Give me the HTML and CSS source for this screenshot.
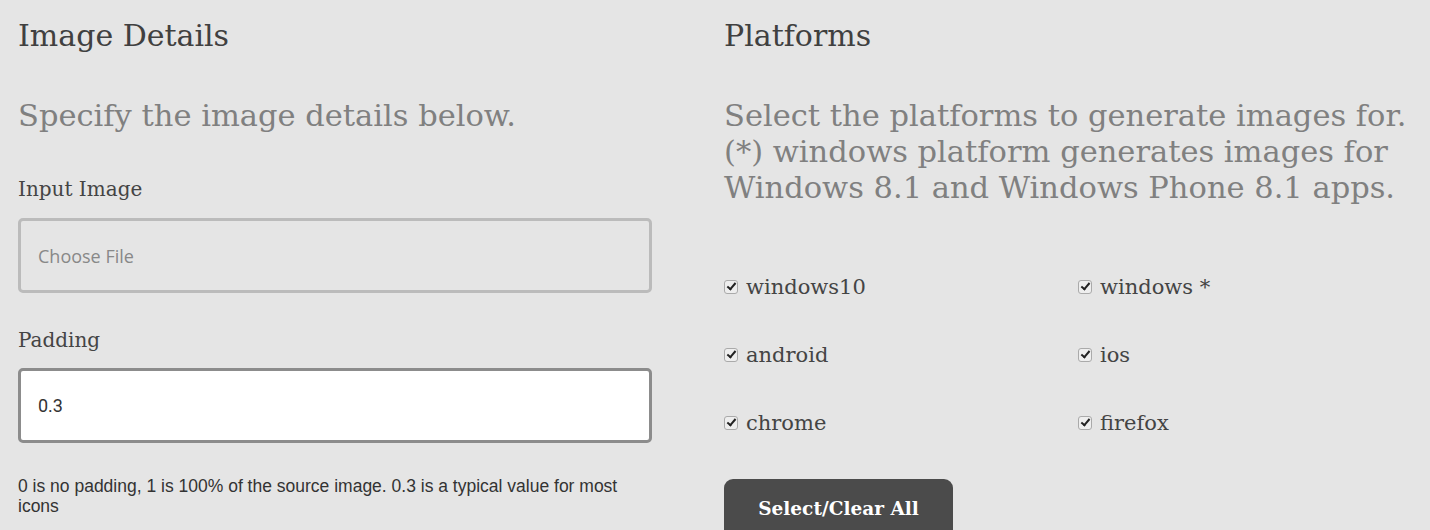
FILE: index.html
```html
<!DOCTYPE html>
<html lang="en">
<head>
<meta charset="utf-8">
<title>Image Generator</title>
<link rel="stylesheet" href="styles.css">
</head>
<body>
<div class="page">
  <section class="col">
    <h2 class="title">Image Details</h2>
    <p class="lead">Specify the image details below.</p>
    <label class="field-label first">Input Image</label>
    <div class="box box-file">Choose File</div>
    <label class="field-label">Padding</label>
    <div class="box box-text">0.3</div>
    <p class="help">0 is no padding, 1 is 100% of the source image. 0.3 is a typical value for most icons</p>
  </section>
  <section class="col">
    <h2 class="title">Platforms</h2>
    <p class="lead">Select the platforms to generate images for.<br>(*) windows platform generates images for<br>Windows 8.1 and Windows Phone 8.1 apps.</p>
    <div class="platforms">
      <label class="check"><span class="tick"></span>windows10</label>
      <label class="check"><span class="tick"></span>windows *</label>
      <label class="check"><span class="tick"></span>android</label>
      <label class="check"><span class="tick"></span>ios</label>
      <label class="check"><span class="tick"></span>chrome</label>
      <label class="check"><span class="tick"></span>firefox</label>
    </div>
    <button class="btn" type="button">Select/Clear All</button>
  </section>
</div>
</body>
</html>
```
FILE: styles.css
```css
html, body {
  margin: 0;
  padding: 0;
  background: #e5e5e5;
  overflow: hidden;
}
.page {
  display: grid;
  grid-template-columns: 706px 706px;
  padding: 0 0 0 18px;
  font-family: "DejaVu Serif", serif;
}
.col {
  display: flex;
  flex-direction: column;
  align-items: flex-start;
}
.title {
  margin: 18px 0 0;
  font-size: 30px;
  line-height: 36px;
  font-weight: normal;
  color: #404040;
  white-space: nowrap;
}
.lead {
  margin: 44px 0 0;
  font-size: 30.5px;
  line-height: 36px;
  color: #808080;
  white-space: nowrap;
}
.field-label {
  margin-top: 35px;
  font-size: 20px;
  line-height: 24px;
  color: #444;
}
.field-label.first {
  margin-top: 43px;
}
.box {
  box-sizing: border-box;
  width: 634px;
  height: 75px;
  margin-top: 16px;
  border: 3px solid #bbb;
  border-radius: 5px;
  padding: 0 17px;
  display: flex;
  align-items: center;
  font-size: 18px;
}
.box-file {
  margin-top: 17px;
  font-family: "Open Sans", sans-serif;
  color: #888;
}
.box-text {
  background: #fff;
  border-color: #8c8c8c;
  font-family: "Roboto", "Liberation Sans", sans-serif;
  color: #333;
}
.help {
  margin: 33px 0 0;
  width: 634px;
  font-family: "Liberation Sans", Arial, sans-serif;
  font-size: 17.5px;
  line-height: 20px;
  color: #333;
}
.platforms {
  margin-top: 69px;
  display: grid;
  grid-template-columns: 354px 354px;
  row-gap: 44px;
}
.check {
  display: flex;
  align-items: center;
  font-size: 21px;
  line-height: 24px;
  color: #444;
}
.tick {
  box-sizing: border-box;
  width: 14px;
  height: 14px;
  margin-right: 8px;
  border: 1px solid #aaa;
  border-radius: 3px;
  background: #eee;
  position: relative;
}
.tick::after {
  content: "";
  position: absolute;
  left: 4px;
  top: 0px;
  width: 3px;
  height: 7px;
  border: solid #222;
  border-width: 0 2px 2px 0;
  transform: rotate(40deg);
}
.btn {
  margin-top: 44px;
  width: 229px;
  height: 70px;
  border: none;
  border-radius: 9px;
  background: #4b4b4b;
  color: #fff;
  font-family: "DejaVu Serif", serif;
  font-weight: bold;
  font-size: 18.5px;
  padding: 0 0 12px;
}
```
